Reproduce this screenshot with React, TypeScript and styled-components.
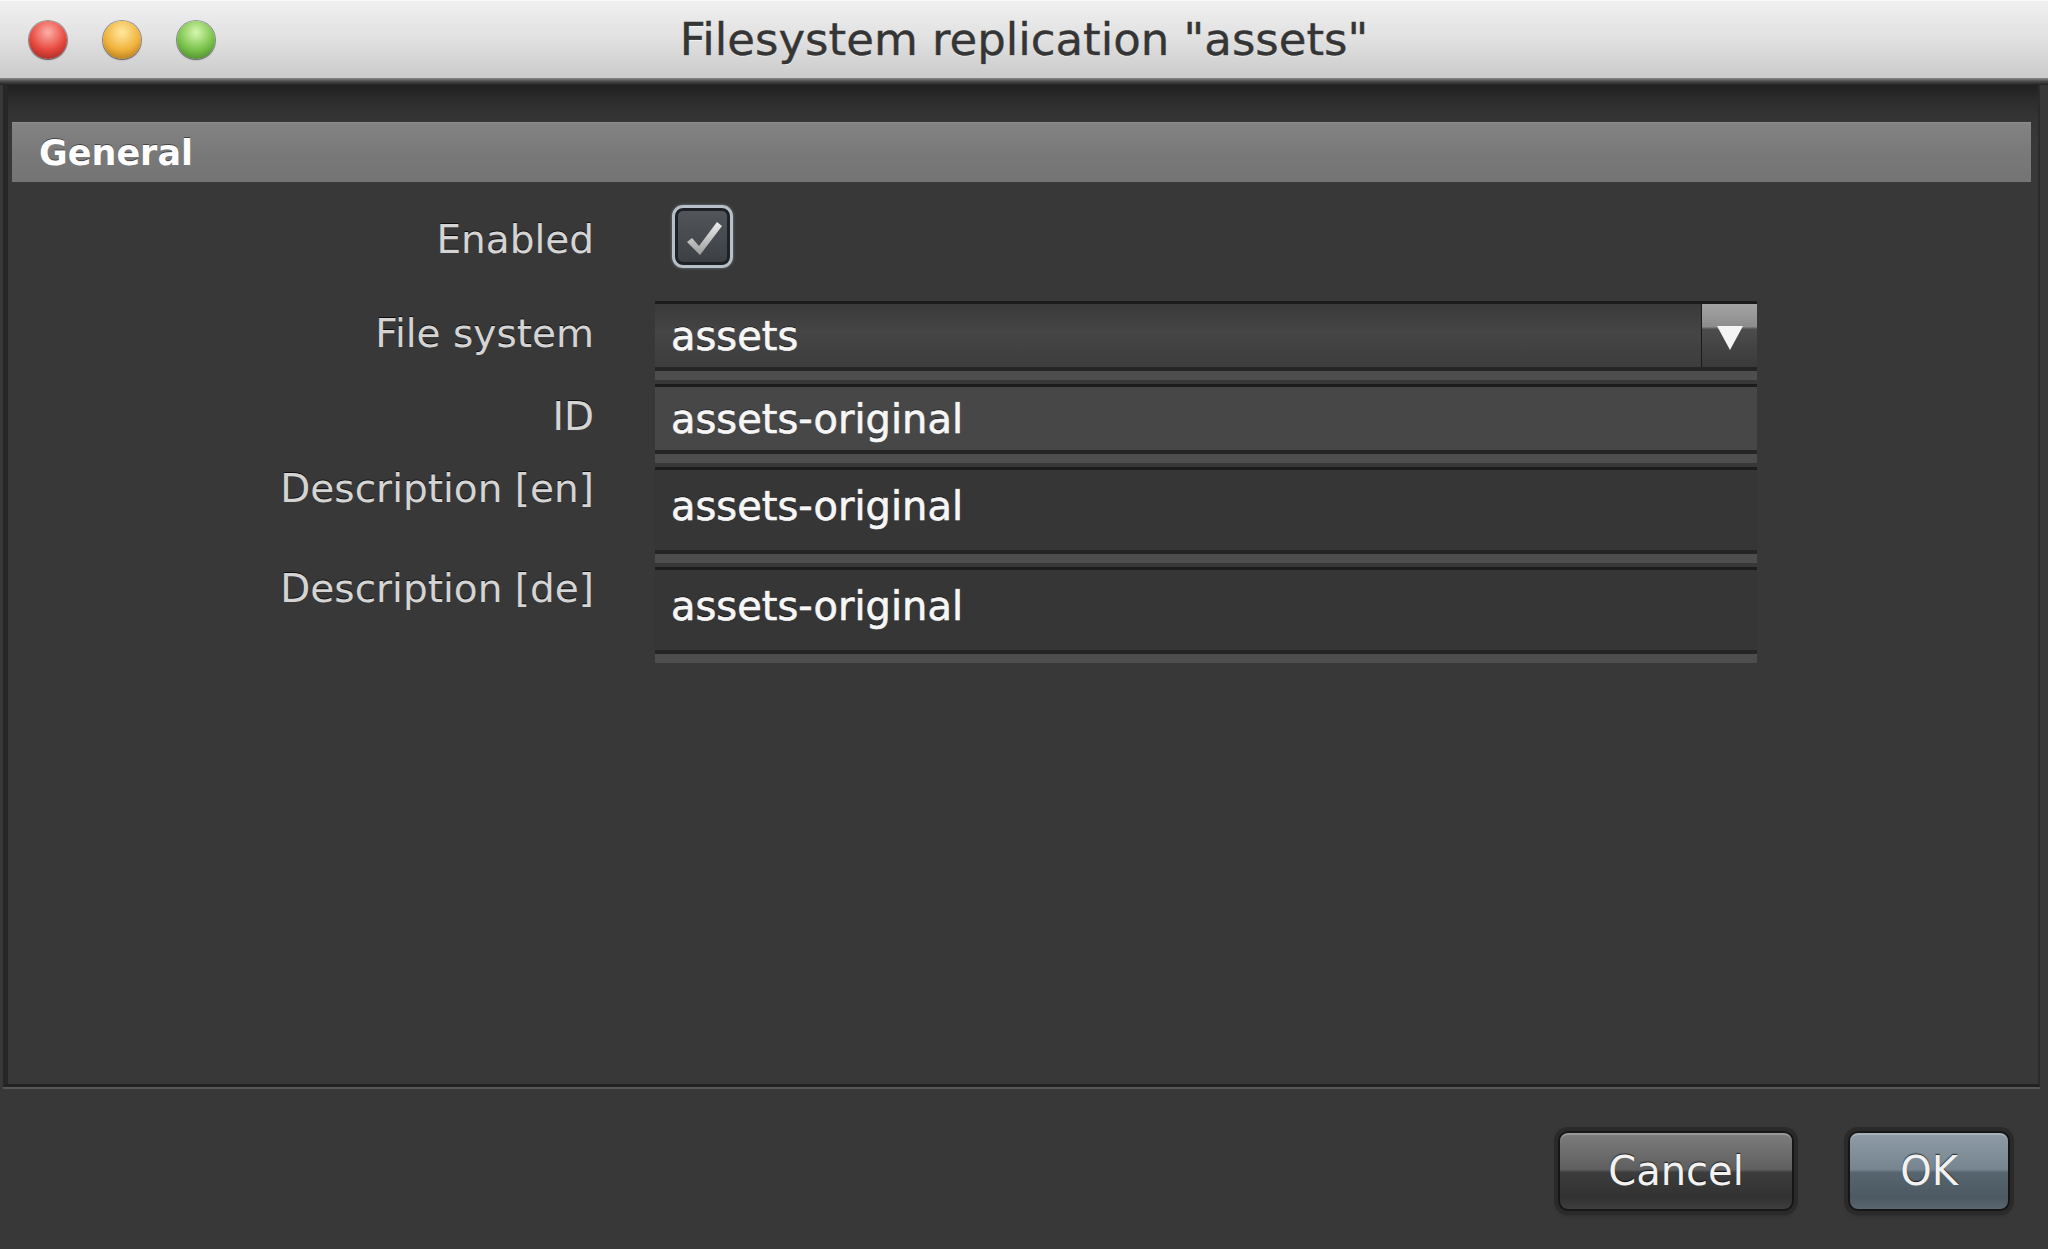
import React from "react";
import styled, { createGlobalStyle } from "styled-components";

const GlobalStyle = createGlobalStyle`
  html, body { margin: 0; padding: 0; background: #383838; }
  body {
    width: 2048px;
    height: 1249px;
    overflow: hidden;
    font-family: "DejaVu Sans", Verdana, sans-serif;
  }
  #root { height: 100%; }
  * { box-sizing: border-box; }
`;

const Window = styled.div`
  width: 2048px;
  height: 1249px;
  display: flex;
  flex-direction: column;
  background: #383838;
`;

const TitleBar = styled.header`
  flex: none;
  height: 78px;
  display: grid;
  grid-template-columns: 1fr auto 1fr;
  align-items: center;
  background: linear-gradient(#f0f0f0, #e2e2e2 45%, #cbcbcb);
  border-top: 1px solid #fafafa;
`;

const TitleEdge = styled.div`
  flex: none;
  height: 7px;
  background: linear-gradient(#8c8c8c, #4c4c4c 45%, #222);
`;

const Lights = styled.div`
  display: flex;
  align-items: center;
  gap: 36px;
  padding-left: 29px;
`;

const Light = styled.span<{ $base: string; $hi: string; $rim: string }>`
  width: 38px;
  height: 38px;
  border-radius: 50%;
  background: radial-gradient(circle at 50% 30%, ${(p) => p.$hi} 0%, ${(p) => p.$base} 55%, ${(p) => p.$rim} 100%);
  box-shadow: 0 0 0 1px rgba(0, 0, 0, 0.35), 0 1px 2px rgba(0, 0, 0, 0.3);
`;

const Title = styled.h1`
  margin: 0;
  font-family: "DejaVu Sans", Verdana, sans-serif;
  font-weight: 400;
  font-size: 45px;
  color: #353535;
  -webkit-text-stroke: 0.4px #353535;
  text-shadow: 0 1px 0 rgba(255, 255, 255, 0.7);
  white-space: nowrap;
`;

const Body = styled.main`
  flex: 1;
  display: flex;
  flex-direction: column;
`;

const Panel = styled.section`
  flex: none;
  height: 1002px;
  margin: 0 8px 0 3px;
  padding-top: 37px;
  border-left: 5px solid #262626;
  border-right: 2px solid #2b2b2b;
  border-bottom: 3px solid #222;
  background: linear-gradient(#202020, #2d2d2d 16px, #353535 34px, #383838 60px);
  box-shadow: 0 2px 0 #575757;
`;

const SectionHeader = styled.div`
  height: 60px;
  margin: 0 7px 0 4px;
  padding-left: 27px;
  display: flex;
  align-items: center;
  background: linear-gradient(#838383, #797979 50%, #747474);
  border-top: 1px solid #8e8e8e;
  color: #fff;
  font-weight: 700;
  font-size: 35px;
  text-shadow: 0 -1px 0 rgba(0, 0, 0, 0.45);
`;

const Form = styled.div`
  margin-top: 23px;
  display: grid;
  grid-template-columns: 586px 1102px;
  column-gap: 61px;
  row-gap: 17px;
`;

const Label = styled.label<{ $top?: boolean; $pad?: number }>`
  align-self: ${(p) => (p.$top ? "start" : "center")};
  justify-self: end;
  padding-top: ${(p) => p.$pad ?? 0}px;
  font-size: 39px;
  line-height: 44px;
  color: #d4d4d4;
  text-shadow: 0 -1px 0 rgba(0, 0, 0, 0.8);
  white-space: nowrap;
`;

const CheckCell = styled.div`
  padding-left: 17px;
  margin-bottom: 16px;
  display: flex;
`;

const CheckBox = styled.span`
  width: 61px;
  height: 63px;
  display: flex;
  border: 3px solid #b7bfc8;
  border-radius: 11px;
  background: linear-gradient(#53575c, #3b3f43);
  box-shadow: inset 0 0 0 3px #1e2226, 0 0 3px rgba(200, 212, 225, 0.45);
  svg { width: 100%; height: 100%; }
`;

const fieldShadow = "0 4px 0 #252525, 0 13px 0 #4e4e4e";

const Combo = styled.div`
  height: 66px;
  display: flex;
  border-top: 3px solid #1c1c1c;
  background: linear-gradient(#3a3a3a, #454545 45%, #3d3d3d);
  box-shadow: ${fieldShadow};
`;

const TextField = styled.div<{ $tone: "light" | "dark"; $tall?: boolean }>`
  height: ${(p) => (p.$tall ? 83 : 66)}px;
  padding-bottom: ${(p) => (p.$tall ? 8 : 0)}px;
  display: flex;
  align-items: center;
  border-top: 3px solid #1c1c1c;
  background: ${(p) => (p.$tone === "light" ? "#474747" : "#363636")};
  box-shadow: ${fieldShadow};
`;

const Value = styled.span`
  flex: 1;
  align-self: center;
  padding-left: 16px;
  font-size: 40px;
  line-height: 48px;
  color: #f6f6f6;
  -webkit-text-stroke: 0.5px #f6f6f6;
  text-shadow: 0 0 1px rgba(255, 255, 255, 0.5), 0 -1px 0 #000;
`;

const DropButton = styled.span`
  width: 56px;
  flex: none;
  display: flex;
  align-items: center;
  justify-content: center;
  border-left: 1px solid #1a1a1a;
  background: linear-gradient(#a4a4a4, #8c8c8c 36%, #4c4c4c 40%, #3a3a3a);
  svg { width: 30px; height: 28px; margin-top: 4px; }
`;

const Footer = styled.footer`
  flex: 1;
  display: flex;
  justify-content: flex-end;
  align-items: flex-start;
  gap: 54px;
  padding: 44px 38px 0 0;
`;

const Button = styled.button<{ $primary?: boolean; $w: number }>`
  width: ${(p) => p.$w}px;
  height: 80px;
  border: 2px solid #161616;
  border-radius: 10px;
  font-family: "DejaVu Sans", Verdana, sans-serif;
  font-size: 40px;
  color: #f2f2f2;
  text-shadow: 0 -1px 1px rgba(0, 0, 0, 0.7);
  background: ${(p) =>
    p.$primary
      ? "linear-gradient(#8f9ca7, #76858f 48%, #57656f 52%, #4c5963 85%, #5a6771)"
      : "linear-gradient(#7d7d7d, #5f5f5f 48%, #3c3c3c 52%, #323232 85%, #3e3e3e)"};
  box-shadow: inset 0 2px 0 rgba(255, 255, 255, 0.22), 0 0 0 4px #2a2a2a, 0 3px 5px rgba(0, 0, 0, 0.5);
`;

export default function App() {
  return (
    <>
      <GlobalStyle />
      <Window>
        <TitleBar>
          <Lights>
            <Light $hi="#ffb0a8" $base="#e5473d" $rim="#8a2320" />
            <Light $hi="#ffe9a0" $base="#f0b13a" $rim="#9a6410" />
            <Light $hi="#d6f7b0" $base="#79c24a" $rim="#3b7424" />
          </Lights>
          <Title>Filesystem replication "assets"</Title>
          <div />
        </TitleBar>
        <TitleEdge />
        <Body>
          <Panel>
            <SectionHeader>General</SectionHeader>
            <Form>
              <Label $top $pad={13}>Enabled</Label>
              <CheckCell>
                <CheckBox>
                  <svg viewBox="0 0 55 57">
                    <defs>
                      <linearGradient id="chk" x1="0" y1="0" x2="0" y2="1">
                        <stop offset="0" stopColor="#eeeeee" />
                        <stop offset="1" stopColor="#9c9c9c" />
                      </linearGradient>
                    </defs>
                    <path d="M12 34 L17 30 L24 38 L42 14 L47 18 L25 47 Z" fill="url(#chk)" />
                  </svg>
                </CheckBox>
              </CheckCell>

              <Label>File system</Label>
              <Combo>
                <Value>assets</Value>
                <DropButton>
                  <svg viewBox="0 0 30 28">
                    <path d="M2 2 L28 2 L15 26 Z" fill="#f4f4f4" />
                  </svg>
                </DropButton>
              </Combo>

              <Label>ID</Label>
              <TextField $tone="light">
                <Value>assets-original</Value>
              </TextField>

              <Label $top>Description [en]</Label>
              <TextField $tone="dark" $tall>
                <Value>assets-original</Value>
              </TextField>

              <Label $top>Description [de]</Label>
              <TextField $tone="dark" $tall>
                <Value>assets-original</Value>
              </TextField>
            </Form>
          </Panel>
          <Footer>
            <Button $w={236}>Cancel</Button>
            <Button $w={162} $primary>OK</Button>
          </Footer>
        </Body>
      </Window>
    </>
  );
}
